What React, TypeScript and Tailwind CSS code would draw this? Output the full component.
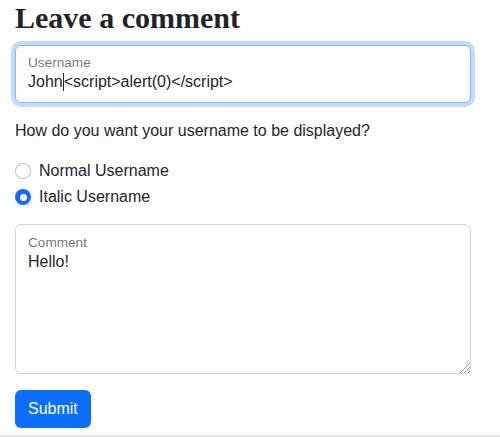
export default function App() {
  return (
    <div className="min-h-[437px] bg-white font-['Liberation_Sans',Arial,sans-serif] text-[#212529]">
      <div className="px-[15px]">
        <h1 className="mb-[9px] font-['Liberation_Serif',serif] text-[30px] font-bold leading-[36px] text-[#212529]">
          Leave a comment
        </h1>

        {/* Username (focused floating input) */}
        <div className="relative h-[58px] w-[456px] rounded-[6px] border border-[#86b7fe] bg-white shadow-[0_0_0_4px_rgba(13,110,253,0.25)]">
          <span className="absolute left-[12px] top-[9px] text-[13.6px] leading-[16px] text-[rgba(33,37,41,0.65)]">
            Username
          </span>
          <div className="absolute left-[12px] top-[24px] flex items-center text-[16px] leading-[24px]">
            <span>John</span>
            <span className="h-[18px] w-px bg-[#212529]" />
            <span>&lt;script&gt;alert(0)&lt;/script&gt;</span>
          </div>
        </div>

        <p className="mt-[16px] mb-[16px] text-[16px] leading-[24px]">How do you want your username to be displayed?</p>

        <div className="flex flex-col gap-[2px]">
          <label className="flex h-[24px] items-center gap-[8px] text-[16px] leading-[24px]">
            <span className="h-[16px] w-[16px] rounded-full border border-[rgba(0,0,0,0.25)] bg-white" />
            Normal Username
          </label>
          <label className="flex h-[24px] items-center gap-[8px] text-[16px] leading-[24px]">
            <span className="flex h-[16px] w-[16px] items-center justify-center rounded-full bg-[#0d6efd]">
              <span className="h-[7px] w-[7px] rounded-full bg-white" />
            </span>
            Italic Username
          </label>
        </div>

        {/* Comment textarea */}
        <div className="relative mt-[15px] h-[150px] w-[456px] rounded-[6px] border border-[#ced4da] bg-white">
          <span className="absolute left-[12px] top-[10px] text-[13.6px] leading-[16px] text-[rgba(33,37,41,0.65)]">
            Comment
          </span>
          <span className="absolute left-[12px] top-[25px] text-[16px] leading-[24px]">Hello!</span>
          <svg className="absolute bottom-0 right-0" width="12" height="12" viewBox="0 0 12 12">
            <line x1="12" y1="2" x2="2" y2="12" stroke="#9a9a9a" strokeWidth="1" />
            <line x1="12" y1="6" x2="6" y2="12" stroke="#9a9a9a" strokeWidth="1" />
            <line x1="12" y1="10" x2="10" y2="12" stroke="#9a9a9a" strokeWidth="1" />
          </svg>
        </div>

        <button className="mt-[16px] h-[38px] rounded-[6px] bg-[#0d6efd] px-[13px] text-[16px] leading-[24px] text-white">
          Submit
        </button>
      </div>
      <div className="mt-[7px] border-t-2 border-[#e5e5e5]" />
    </div>
  );
}
